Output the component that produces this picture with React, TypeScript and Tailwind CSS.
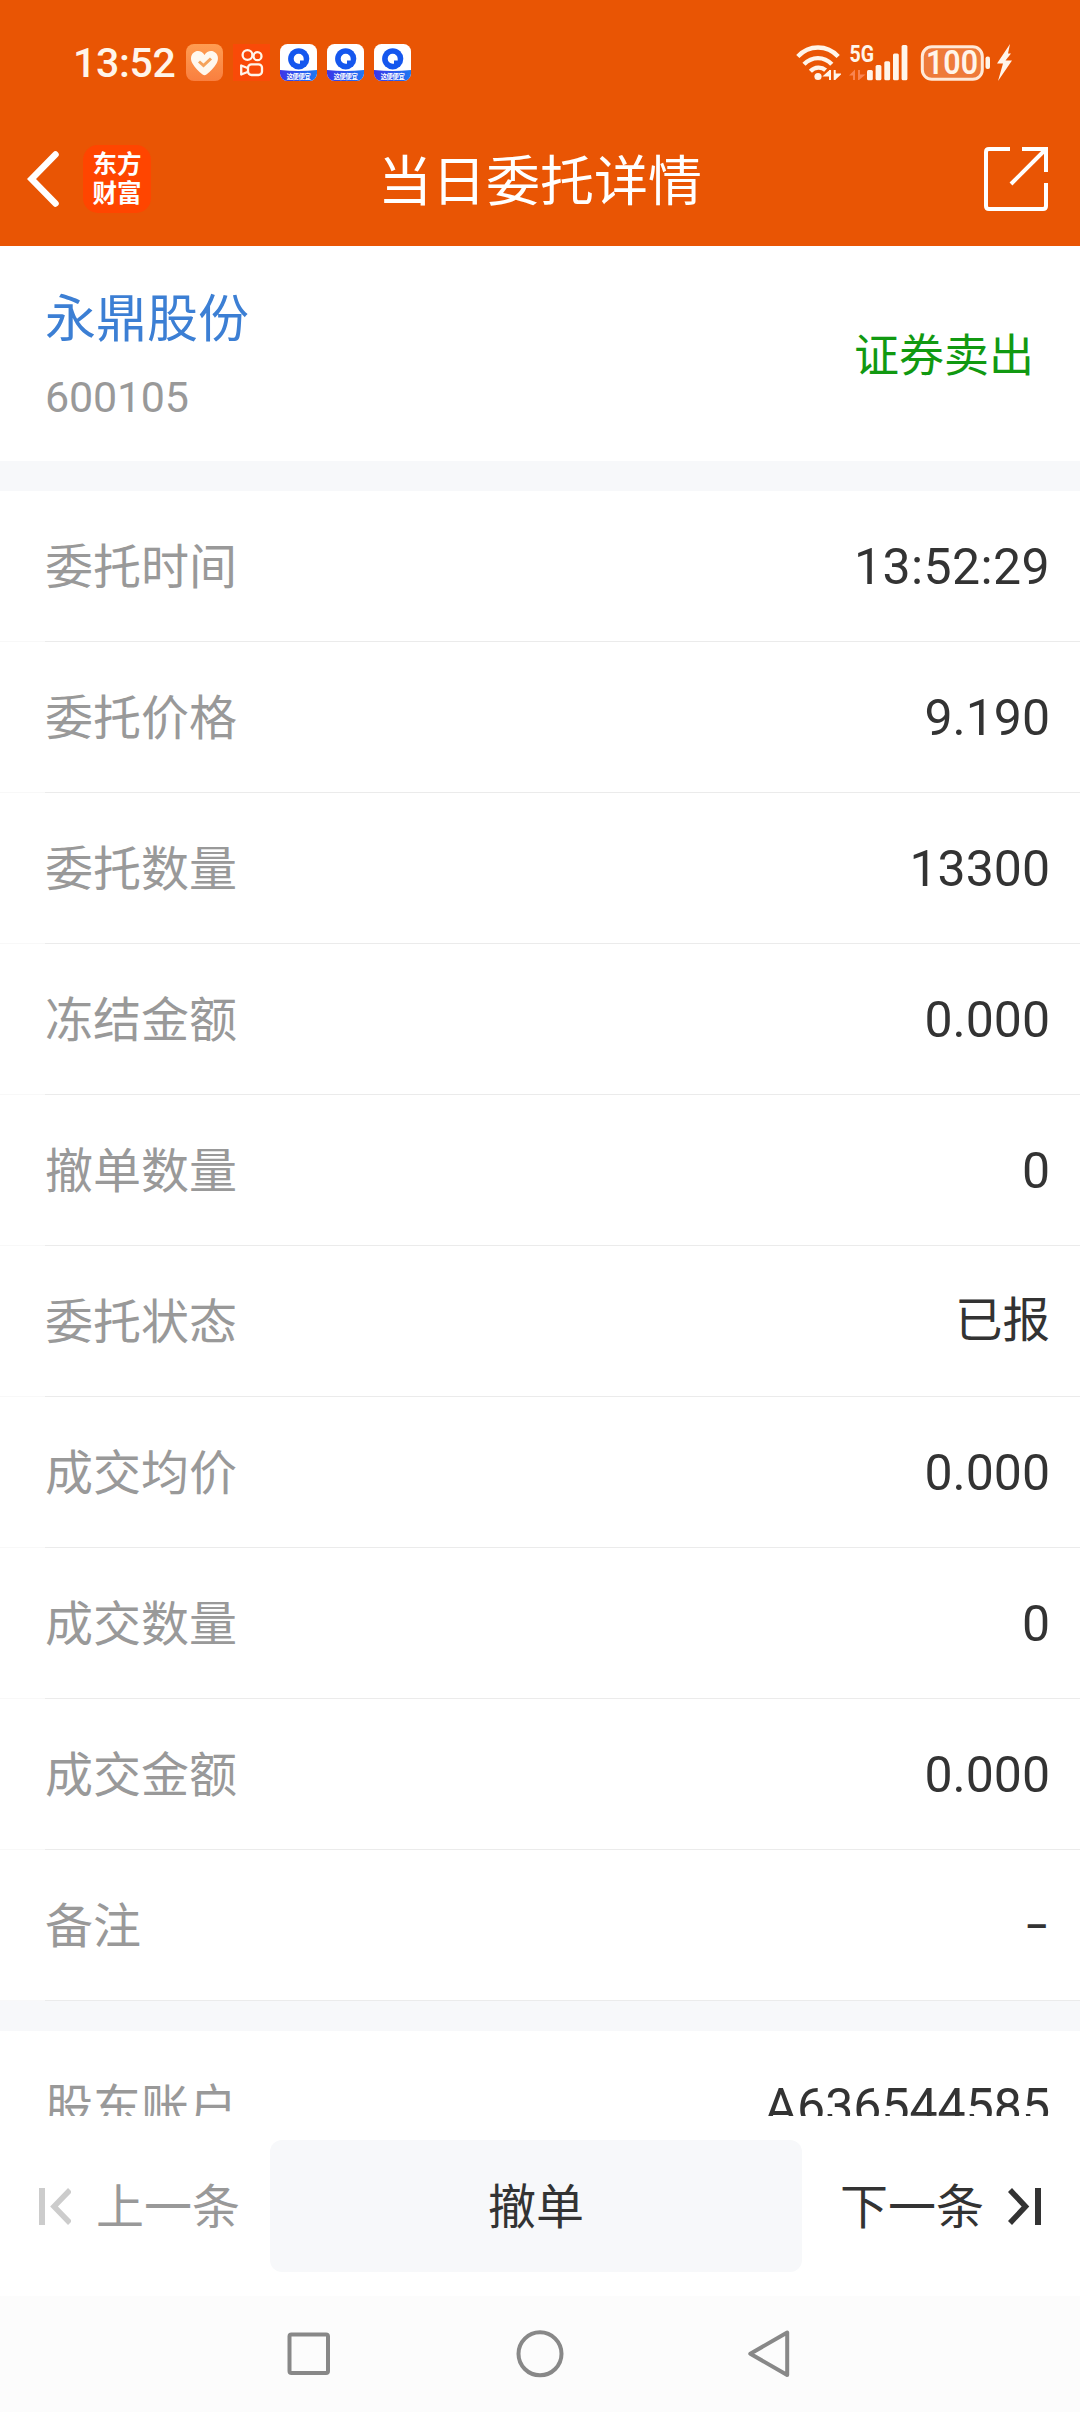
interface DetailRow {
  label: string;
  value: string;
}

const rows: DetailRow[] = [
  { label: '委托时间', value: '13:52:29' },
  { label: '委托价格', value: '9.190' },
  { label: '委托数量', value: '13300' },
  { label: '冻结金额', value: '0.000' },
  { label: '撤单数量', value: '0' },
  { label: '委托状态', value: '已报' },
  { label: '成交均价', value: '0.000' },
  { label: '成交数量', value: '0' },
  { label: '成交金额', value: '0.000' },
  { label: '备注', value: '–' },
];

function valueClass(value: string): string {
  if (value === '–') return 'text-[36px] font-semibold pt-1 pr-0.5';
  if (value.includes(':')) return 'text-[50px] tracking-[0.4px] pt-px';
  if (/^[\w.]+$/.test(value)) return 'text-[50px] pt-px';
  return 'text-[47.5px] pt-0.5';
}

function HeartIcon() {
  return (
    <svg width="37" height="37" viewBox="0 0 37 37">
      <defs>
        <linearGradient id="heartBg" x1="0" y1="0" x2="0" y2="1">
          <stop offset="0" stopColor="#ff9d52" />
          <stop offset="1" stopColor="#f97f3f" />
        </linearGradient>
      </defs>
      <rect width="37" height="37" rx="8" fill="url(#heartBg)" />
      <path
        d="M18.5 11C16.5 7.4 12.5 6.4 9.5 7.6C4.8 9.6 3.8 15 6.5 19.5C8.7 23.3 13 28 16.6 30.6Q18.5 31.8 20.4 30.6C24 28 28.3 23.3 30.5 19.5C33.2 15 32.2 9.6 27.5 7.6C24.5 6.4 20.5 7.4 18.5 11Z"
        fill="#fff8ef"
      />
      <path d="M13 17.5L17.5 21.5L25 14.5" fill="none" stroke="#f5a35c" strokeWidth="3" />
    </svg>
  );
}

function CameraIcon() {
  return (
    <svg width="37" height="37" viewBox="0 0 37 37" fill="none" stroke="#fff5ea" strokeWidth="2.3">
      <rect width="37" height="37" fill="#f94a08" stroke="none" />
      <circle cx="14.5" cy="11" r="4.9" />
      <circle cx="24.5" cy="12.2" r="4" />
      <rect x="15" y="20.3" width="14" height="10.7" rx="3.5" />
      <path d="M14.5 24L8.2 21.5V30.5L14.5 28" strokeLinejoin="round" />
    </svg>
  );
}

function BlueAppIcon() {
  return (
    <svg width="37" height="37" viewBox="0 0 37 37">
      <defs>
        <clipPath id="blueAppClip">
          <rect width="37" height="37" rx="7.5" />
        </clipPath>
        <linearGradient id="blueAppBand" x1="0" y1="0" x2="1" y2="0">
          <stop offset="0" stopColor="#3b35e8" />
          <stop offset="1" stopColor="#1f78f2" />
        </linearGradient>
      </defs>
      <g clipPath="url(#blueAppClip)">
        <rect width="37" height="37" fill="#fff" />
        <circle cx="18.7" cy="14.8" r="10.6" fill="#1557ee" />
        <path d="M18.7 9.8A5 5 0 1 0 18.7 19.8H20V16.5H23.7V14.8A5 5 0 0 0 18.7 9.8Z" fill="#fff" />
        <path d="M0 26Q18.5 28 37 26V37H0Z" fill="url(#blueAppBand)" />
        <text
          x="18.7"
          y="34.8"
          textAnchor="middle"
          textLength="24"
          fontSize="6.3"
          fontWeight="700"
          fill="#fff"
        >
          这便便宜
        </text>
      </g>
    </svg>
  );
}

function WifiIcon() {
  return (
    <svg width="45" height="36" viewBox="0 0 45 36" fill="none" stroke="#fff5ea" strokeWidth="4.4">
      <path d="M1.8 11.5C13 -0.5 31 -0.5 42.2 11.5" />
      <path d="M8 19.3C16 11 28 11 35.8 19.3" />
      <path d="M14.4 26.2C19 21.6 25.5 21.6 29.6 25.2" />
      <circle cx="22" cy="31.5" r="3.6" fill="#fff5ea" stroke="none" />
      <path
        d="M34 25V35M34 26L29 30.5H34M38.7 25V35M38.7 34L43.5 29.5H38.7"
        strokeWidth="2"
        fill="#fff5ea"
      />
    </svg>
  );
}

function SignalIcon() {
  return (
    <svg className="overflow-visible" width="60" height="36" viewBox="0 0 60 36" fill="#fff5ea">
      <text x="0.5" y="17.3" fontSize="24" fontWeight="700" textLength="24.5" lengthAdjust="spacingAndGlyphs">
        5G
      </text>
      <path d="M0 30.5L6 24.5V35H4V30.5ZM9 25H11V29.5H16.5L10 35H9Z" fill="#f98450" />
      <rect x="18" y="25" width="5.8" height="10.3" rx="1.5" />
      <rect x="26.6" y="20" width="5.8" height="15.3" rx="1.5" />
      <rect x="35.3" y="16.3" width="5.8" height="19" rx="1.5" />
      <rect x="44" y="8.5" width="5.8" height="26.8" rx="1.5" />
      <rect x="52.6" y="0" width="5.8" height="35.3" rx="1.5" />
    </svg>
  );
}

function BatteryIcon() {
  return (
    <svg width="92" height="38" viewBox="0 0 92 38" fill="#fff5ea">
      <rect x="2.3" y="2.8" width="60" height="32.5" rx="9.5" fill="#ee7a3a" stroke="#ffe9d8" strokeWidth="3" />
      <text x="6" y="30.3" fontSize="32.5" fontWeight="600" textLength="52" lengthAdjust="spacingAndGlyphs">
        100
      </text>
      <rect x="65.5" y="12.5" width="4.5" height="12.5" rx="2" />
      <path d="M90 0L77 19.5H83L78 37L92 16.5H85.5L91 9.5H88Z" />
    </svg>
  );
}

function StatusBar() {
  return (
    <div className="flex h-[82px] items-end justify-between pr-[68px] pl-[73px] text-[#fff5ea]">
      <div className="flex items-center gap-2.5">
        <span className="w-[103px] pt-0.5 text-[41px] leading-[37px] font-medium tracking-[-0.3px]">13:52</span>
        <HeartIcon />
        <CameraIcon />
        <BlueAppIcon />
        <BlueAppIcon />
        <BlueAppIcon />
      </div>
      <div className="flex items-center">
        <WifiIcon />
        <span className="w-2" />
        <SignalIcon />
        <span className="w-[11px]" />
        <BatteryIcon />
      </div>
    </div>
  );
}

function TitleBar() {
  return (
    <div className="grid h-[164px] grid-cols-3 items-center px-[27px] pt-[29px] text-white">
      <div className="flex items-center gap-6">
        <svg width="32" height="56" viewBox="0 0 32 56" fill="none" stroke="#fff" strokeWidth="6.5">
          <path d="M28.5 3.5L4.5 28L28.5 52.5" strokeLinecap="round" />
        </svg>
        <div className="flex size-[68px] flex-col items-center justify-center rounded-[15px] bg-[#ff4500] text-[24.5px] leading-[29px] font-bold">
          <span>东方</span>
          <span>财富</span>
        </div>
      </div>
      <h1 className="pt-2 text-center text-[54px] leading-none whitespace-nowrap">当日委托详情</h1>
      <svg className="mr-[5px] justify-self-end" width="64" height="64" viewBox="0 0 64 64" fill="none" stroke="#fff" strokeWidth="4">
        <path d="M26 2H5Q2 2 2 5V59Q2 62 5 62H59Q62 62 62 59V36" />
        <path d="M38 2H62V25" />
        <path d="M61 3L27 37" />
      </svg>
    </div>
  );
}

function Row({ label, value }: DetailRow) {
  return (
    <div className="flex h-[151px] flex-col">
      <div className="flex flex-1 items-center justify-between pr-[30px] pl-[45px]">
        <span className="pt-1 text-[48px] leading-none text-[#999]">{label}</span>
        <span className={`leading-none text-[#333] ${valueClass(value)}`}>{value}</span>
      </div>
      <div className="h-px border-l-[45px] border-[#f8f8f8] bg-[#ebebeb]" />
    </div>
  );
}

function ActionBar() {
  return (
    <div className="flex h-[180px] items-start bg-white pt-6 text-[48px] leading-none">
      <button className="flex h-[132px] w-[270px] items-center gap-[25px] pl-[38px] text-[#999]">
        <svg width="33" height="37" viewBox="0 0 33 37" fill="none" stroke="#ccc">
          <path d="M4 0V37" strokeWidth="6" />
          <path d="M32 2L16 18.5L32 35" strokeWidth="5.5" />
        </svg>
        <span className="pt-[3px]">上一条</span>
      </button>
      <button className="h-[132px] w-[532px] rounded-xl bg-[#f7f8fa] pt-[3px] text-[#333]">撤单</button>
      <button className="flex h-[132px] flex-1 items-center gap-6 pl-[38px] text-[#333]">
        <span className="pt-[3px]">下一条</span>
        <svg width="33" height="37" viewBox="0 0 33 37" fill="none" stroke="#333">
          <path d="M2 2L17.5 18.5L2 35" strokeWidth="5.5" />
          <path d="M30 0V37" strokeWidth="6" />
        </svg>
      </button>
    </div>
  );
}

function NavBar() {
  return (
    <div className="flex h-[116px] items-center bg-[#fcfcfc] pl-[284px]">
      <svg width="48" height="48" viewBox="0 0 48 48" fill="none" stroke="#888" strokeWidth="4">
        <rect x="5.5" y="4.5" width="38.5" height="38.5" rx="2" />
      </svg>
      <svg className="ml-[184px]" width="48" height="48" viewBox="0 0 48 48" fill="none" stroke="#888" strokeWidth="4">
        <circle cx="24" cy="23.8" r="21.5" />
      </svg>
      <svg className="ml-[183px]" width="48" height="48" viewBox="0 0 48 48" fill="none" stroke="#888" strokeWidth="4">
        <path d="M40.2 2.5V45L3.3 23.8Z" strokeLinejoin="round" />
      </svg>
    </div>
  );
}

export default function App() {
  return (
    <div className="flex h-[2412px] w-[1080px] flex-col overflow-hidden bg-white font-[Roboto,'Noto_Sans_CJK_SC',sans-serif]">
      <header className="h-[246px] bg-[#e95504]">
        <StatusBar />
        <TitleBar />
      </header>

      <section className="flex h-[215px] items-center justify-between pr-[46px] pl-[45px]">
        <div className="flex flex-col gap-[31px] pt-[6px]">
          <span className="text-[51px] leading-none text-[#3c7fd4]">永鼎股份</span>
          <span className="text-[43px] leading-none tracking-[-0.2px] text-[#999]">600105</span>
        </div>
        <span className="pt-[5px] text-[45px] leading-none text-[#119911]">证券卖出</span>
      </section>

      <main className="min-h-0 flex-1 overflow-hidden border-t-[30px] border-[#f7f8fa]">
        {rows.map((row) => (
          <Row key={row.label} {...row} />
        ))}
        <div className="h-[30px] bg-[#f7f8fa]" />
        <Row label="股东账户" value="A636544585" />
      </main>

      <ActionBar />
      <NavBar />
    </div>
  );
}
